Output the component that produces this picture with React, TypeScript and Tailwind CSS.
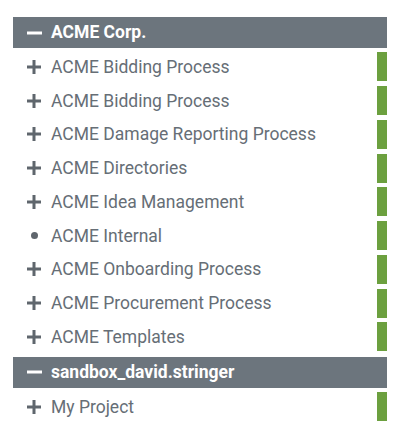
const sections = [
  {
    title: 'ACME Corp.',
    items: [
      { name: 'ACME Bidding Process', leaf: false },
      { name: 'ACME Bidding Process', leaf: false },
      { name: 'ACME Damage Reporting Process', leaf: false },
      { name: 'ACME Directories', leaf: false },
      { name: 'ACME Idea Management', leaf: false },
      { name: 'ACME Internal', leaf: true },
      { name: 'ACME Onboarding Process', leaf: false },
      { name: 'ACME Procurement Process', leaf: false },
      { name: 'ACME Templates', leaf: false },
    ],
  },
  {
    title: 'sandbox_david.stringer',
    items: [{ name: 'My Project', leaf: false }],
  },
];

const PlusIcon = () => (
  <svg width="14" height="14" viewBox="0 0 14 14" className="shrink-0">
    <rect x="5.5" y="0" width="3" height="14" fill="#5f666d" />
    <rect x="0" y="5.5" width="14" height="3" fill="#5f666d" />
  </svg>
);

const MinusIcon = () => (
  <svg width="15" height="14" viewBox="0 0 15 14" className="shrink-0">
    <rect x="0" y="5.5" width="15" height="3" fill="#ffffff" />
  </svg>
);

const Dot = () => (
  <span className="flex h-[14px] w-[14px] shrink-0 items-center justify-center">
    <span className="h-[7px] w-[7px] rounded-full bg-[#5f666d]" />
  </span>
);

export default function App() {
  return (
    <div
      className="w-[400px] h-[440px] bg-white px-[13px] pt-[17px]"
      style={{ fontFamily: 'Roboto, "Liberation Sans", sans-serif' }}
    >
      {sections.map((section, sIndex) => (
        <div key={section.title} className={sIndex > 0 ? 'mt-[3px]' : ''}>
          <div className="flex h-[31px] items-center gap-[9px] bg-[#6c757d] pl-[14px] text-[17.5px] font-bold text-white">
            <MinusIcon />
            <span>{section.title}</span>
          </div>
          <div className="pt-[2px]">
            {section.items.map((item, index) => (
              <div key={index} className="flex h-[33.75px] items-center">
                <div className="flex flex-1 items-center gap-[10px] pl-[14px] text-[17.5px] text-[#666e76]">
                  {item.leaf ? <Dot /> : <PlusIcon />}
                  <span>{item.name}</span>
                </div>
                <div className="h-[29px] w-[10px] bg-[#6ca03f]" />
              </div>
            ))}
          </div>
        </div>
      ))}
    </div>
  );
}
